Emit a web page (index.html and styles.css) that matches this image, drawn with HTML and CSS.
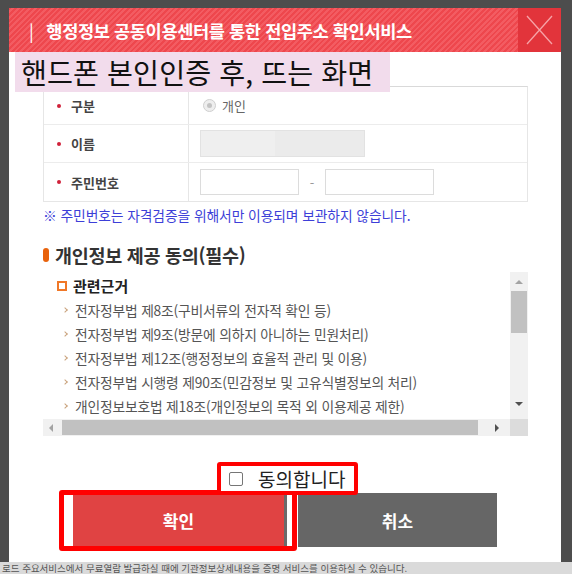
FILE: index.html
```html
<!DOCTYPE html>
<html lang="ko">
<head>
<meta charset="utf-8">
<link rel="stylesheet" href="styles.css">
</head>
<body>
<div class="screen">
  <div class="modal">
    <div class="hd">
      <h1 class="title"><span class="bar">|</span>행정정보 공동이용센터를 통한 전입주소 확인서비스</h1>
      <div class="close">
        <svg width="43" height="44" viewBox="0 0 43 44"><path d="M9 8 L34 36 M34 8 L9 36" stroke="#f6a3a7" stroke-width="1.3" fill="none"/></svg>
      </div>
    </div>
    <div class="note">핸드폰 본인인증 후, 뜨는 화면</div>
    <div class="body">
      <div class="form">
        <div class="row">
          <div class="lbl"><span class="dot"></span>구분</div>
          <div class="val"><span class="radio"><span class="radio-in"></span></span><span class="radio-txt">개인</span></div>
        </div>
        <div class="row">
          <div class="lbl"><span class="dot"></span>이름</div>
          <div class="val"><div class="name-box"><span class="name-a"></span><span class="name-b"></span></div></div>
        </div>
        <div class="row last">
          <div class="lbl"><span class="dot"></span>주민번호</div>
          <div class="val"><span class="inp inp1"></span><span class="dash">-</span><span class="inp inp2"></span></div>
        </div>
      </div>
      <p class="notice">※ 주민번호는 자격검증을 위해서만 이용되며 보관하지 않습니다.</p>
      <h2 class="sec"><span class="pill"></span>개인정보 제공 동의(필수)</h2>
      <div class="scroll">
        <div class="scroll-content">
          <div class="sub"><span class="sq"></span>관련근거</div>
          <ul class="law">
            <li>전자정부법 제8조(구비서류의 전자적 확인 등)</li>
            <li>전자정부법 제9조(방문에 의하지 아니하는 민원처리)</li>
            <li>전자정부법 제12조(행정정보의 효율적 관리 및 이용)</li>
            <li>전자정부법 시행령 제90조(민감정보 및 고유식별정보의 처리)</li>
            <li>개인정보보호법 제18조(개인정보의 목적 외 이용제공 제한)</li>
          </ul>
        </div>
        <div class="vbar">
          <span class="arr-up"></span>
          <span class="vthumb"></span>
          <span class="vtrack"></span>
          <span class="arr-down"></span>
        </div>
        <div class="hbar">
          <span class="arr-left"></span>
          <span class="hthumb"></span>
          <span class="arr-right"></span>
        </div>
        <div class="corner"></div>
      </div>
      <div class="agree">
        <label class="agree-box"><span class="cb"></span>동의합니다</label>
      </div>
      <div class="btns">
        <div class="ok-frame">
          <span class="ok-gap"></span>
          <span class="ok">확인</span>
          <span class="ok-edge"></span>
        </div>
        <span class="cancel">취소</span>
      </div>
    </div>
  </div>
  <div class="below">로드 주요서비스에서 무료열람 발급하실 때에 기관정보상세내용을 증명 서비스를 이용하실 수 있습니다.</div>
</div>
</body>
</html>
```
FILE: styles.css
```css
* { box-sizing: border-box; }
html, body { margin: 0; padding: 0; }
body {
  width: 572px;
  height: 574px;
  overflow: hidden;
  background: #4d4d4d;
  font-family: "Noto Sans CJK KR", "Noto Sans", sans-serif;
}
.screen {
  padding-top: 8px;
  height: 574px;
  display: flex;
  flex-direction: column;
}
.modal {
  position: relative;
  margin-left: 9px;
  width: 552px;
  height: 554px;
  background: #fff;
  overflow: hidden;
}
.hd {
  height: 44px;
  display: flex;
  background: repeating-linear-gradient(135deg, #ee474d 0 2px, #f35c62 2px 4px);
}
.title {
  flex: 1;
  margin: 0;
  padding-left: 20px;
  display: flex;
  align-items: center;
  color: #fff;
  font-size: 17.6px;
  font-weight: 700;
  letter-spacing: -0.4px;
}
.bar { margin-right: 13px; font-weight: 400; }
.close {
  width: 43px;
  height: 44px;
  background: #e2343b;
}
.close svg { display: block; }
.note {
  position: absolute;
  left: 6px;
  top: 44px;
  width: 375px;
  height: 40px;
  background: #f2dcec;
  color: #111;
  font-size: 28.2px;
  line-height: 40px;
  padding-left: 6px;
  letter-spacing: 0.1px;
}
.body {
  padding: 34px 33px 0 34px;
  display: flex;
  flex-direction: column;
}
.form {
  border: 1px solid #e6e6e6;
  border-top-color: #d9d9d9;
}
.row {
  display: grid;
  grid-template-columns: 145px 1fr;
  height: 38px;
  border-bottom: 1px solid #ececec;
}
.row.last { border-bottom: none; }
.lbl {
  display: flex;
  align-items: center;
  padding-left: 13px;
  border-right: 1px solid #e6e6e6;
  font-size: 13px;
  font-weight: 700;
  color: #444;
}
.dot {
  width: 4px;
  height: 4px;
  border-radius: 50%;
  background: #d0213a;
  margin-right: 10px;
}
.val {
  display: flex;
  align-items: center;
  padding-left: 11px;
  font-size: 13px;
  color: #666;
}
.radio {
  width: 13px;
  height: 13px;
  margin-left: 3px;
  border-radius: 50%;
  border: 1px solid #cfcfcf;
  background: #eee;
  display: flex;
  align-items: center;
  justify-content: center;
}
.radio-in {
  width: 5px;
  height: 5px;
  border-radius: 50%;
  background: #c3c3c3;
}
.radio-txt { margin-left: 6px; }
.name-box {
  width: 165px;
  height: 27px;
  display: flex;
  border: 1px solid #e2e2e2;
  background: #ebebeb;
}
.name-a { width: 74px; background: #efefef; }
.name-b { flex: 1; }
.inp {
  height: 26px;
  border: 1px solid #dcdcdc;
  background: #fff;
}
.inp1 { width: 99px; }
.inp2 { width: 109px; }
.dash { width: 26px; text-align: center; color: #999; font-size: 13px; }
.notice {
  margin: 4px 0 0;
  line-height: 18px;
  font-size: 13.8px;
  color: #3d3fd8;
  letter-spacing: -0.1px;
}
.sec {
  margin: 19px 0 0;
  line-height: 24px;
  font-size: 18.5px;
  font-weight: 700;
  color: #333;
  display: flex;
  align-items: center;
  letter-spacing: -0.3px;
}
.pill {
  width: 6px;
  height: 14px;
  border-radius: 3px;
  background: #e8620c;
  margin-right: 6px;
}
.scroll {
  margin-top: 5px;
  height: 164px;
  display: grid;
  grid-template-columns: 1fr 18px;
  grid-template-rows: 147px 17px;
}
.scroll-content {
  overflow: hidden;
  padding: 2px 0 0 14px;
}
.sub {
  display: flex;
  align-items: center;
  line-height: 24px;
  font-size: 15px;
  font-weight: 700;
  color: #222;
}
.sq {
  width: 10px;
  height: 10px;
  border: 2px solid #f07828;
  margin-right: 6px;
}
.law {
  list-style: none;
  margin: 0;
  padding: 0 0 0 6px;
  white-space: nowrap;
}
.law li {
  line-height: 24px;
  font-size: 13.8px;
  color: #555;
  display: flex;
  align-items: center;
  letter-spacing: -0.2px;
}
.law li::before {
  content: "";
  width: 3px;
  height: 3px;
  border-right: 1px solid #c9a27c;
  border-bottom: 1px solid #c9a27c;
  transform: rotate(-45deg);
  margin-right: 8px;
}
.vbar {
  background: #f1f1f1;
  display: flex;
  flex-direction: column;
  align-items: center;
}
.arr-up {
  margin-top: 8px;
  width: 0;
  height: 0;
  border-left: 4px solid transparent;
  border-right: 4px solid transparent;
  border-bottom: 4px solid #a3a3a3;
}
.vthumb {
  margin-top: 7px;
  width: 16px;
  height: 42px;
  background: #c1c1c1;
}
.vtrack { flex: 1; }
.arr-down {
  margin-bottom: 13px;
  width: 0;
  height: 0;
  border-left: 4px solid transparent;
  border-right: 4px solid transparent;
  border-top: 4px solid #505050;
}
.hbar {
  background: #f1f1f1;
  display: flex;
  align-items: center;
}
.arr-left {
  margin-left: 6px;
  width: 0;
  height: 0;
  border-top: 4px solid transparent;
  border-bottom: 4px solid transparent;
  border-right: 4px solid #a3a3a3;
}
.hthumb {
  margin-left: 9px;
  width: 416px;
  height: 15px;
  background: #c1c1c1;
}
.arr-right {
  margin-left: 17px;
  width: 0;
  height: 0;
  border-top: 4px solid transparent;
  border-bottom: 4px solid transparent;
  border-left: 4px solid #505050;
}
.corner { background: #dcdcdc; }
.agree {
  margin-top: 26px;
  display: flex;
  padding-left: 174px;
  position: relative;
  z-index: 2;
}
.agree-box {
  width: 141px;
  height: 33px;
  border: 4px solid #ff0000;
  border-radius: 3px;
  background: #fff;
  display: flex;
  align-items: center;
  padding-left: 8px;
  font-size: 19px;
  color: #222;
  white-space: nowrap;
}
.cb {
  width: 14px;
  height: 14px;
  border: 1px solid #767676;
  border-radius: 2px;
  background: #fff;
  margin-right: 15px;
  flex: none;
}
.btns {
  margin-top: -5px;
  display: flex;
  align-items: flex-start;
  padding-left: 16px;
}
.ok-frame {
  width: 238px;
  height: 61px;
  border: 5px solid #ff0000;
  border-radius: 3px;
  background: #fff;
  display: flex;
}
.ok-gap { width: 9px; }
.ok {
  width: 211px;
  background: #e04343;
  color: #fff;
  font-size: 17px;
  font-weight: 700;
  display: flex;
  align-items: center;
  justify-content: center;
}
.ok-edge { width: 3px; background: #6a6a6a; }
.cancel {
  margin-top: 3px;
  margin-left: 1px;
  width: 199px;
  height: 54px;
  background: #666;
  color: #fff;
  font-size: 17px;
  font-weight: 700;
  display: flex;
  align-items: center;
  justify-content: center;
}
.below {
  height: 12px;
  overflow: hidden;
  background: #dadada;
  color: #555;
  font-size: 9.5px;
  line-height: 12px;
  white-space: nowrap;
  padding-left: 2px;
}
```
